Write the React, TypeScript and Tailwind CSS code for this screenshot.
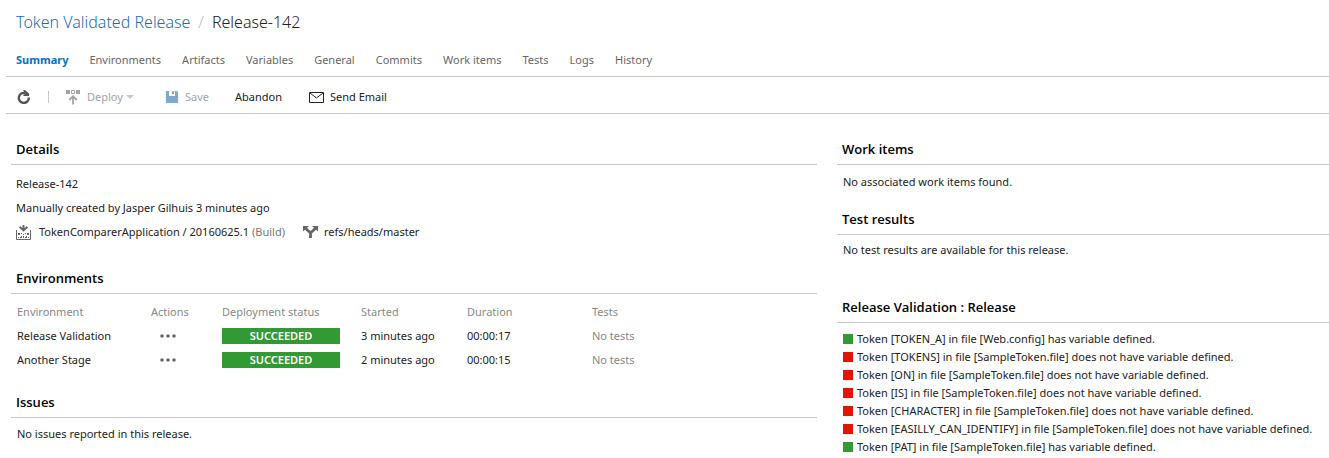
import type { ReactNode } from 'react';

const tabs = ['Summary', 'Environments', 'Artifacts', 'Variables', 'General', 'Commits', 'Work items', 'Tests', 'Logs', 'History'];

const environments = [
  { name: 'Release Validation', status: 'SUCCEEDED', started: '3 minutes ago', duration: '00:00:17', tests: 'No tests' },
  { name: 'Another Stage', status: 'SUCCEEDED', started: '2 minutes ago', duration: '00:00:15', tests: 'No tests' },
];

const tokens = [
  { ok: true, text: 'Token [TOKEN_A] in file [Web.config] has variable defined.' },
  { ok: false, text: 'Token [TOKENS] in file [SampleToken.file] does not have variable defined.' },
  { ok: false, text: 'Token [ON] in file [SampleToken.file] does not have variable defined.' },
  { ok: false, text: 'Token [IS] in file [SampleToken.file] does not have variable defined.' },
  { ok: false, text: 'Token [CHARACTER] in file [SampleToken.file] does not have variable defined.' },
  { ok: false, text: 'Token [EASILLY_CAN_IDENTIFY] in file [SampleToken.file] does not have variable defined.' },
  { ok: true, text: 'Token [PAT] in file [SampleToken.file] has variable defined.' },
];

function RefreshIcon() {
  return (
    <svg width="14" height="14" viewBox="0 0 14 14" aria-hidden="true">
      <path d="M8.5 3.2A5 5 0 1 0 11.8 7.5" fill="none" stroke="#555" strokeWidth="2.4" />
      <path d="M6 0h2l4 3.6V6H6.4V4.6L8.6 4z" fill="#555" />
    </svg>
  );
}

function DeployIcon() {
  return (
    <svg width="14" height="15" viewBox="0 0 14 15" aria-hidden="true">
      <path d="M0 0h4v4H0zM10 0h4v4h-4z" fill="#a3a3a3" />
      <path d="M5.5.5h3v3h-3z" fill="none" stroke="#a3a3a3" />
      <path d="M7 14.5V6.5M3.2 10 7 6.2l3.8 3.8" fill="none" stroke="#a3a3a3" strokeWidth="1.8" />
    </svg>
  );
}

function SaveIcon() {
  return (
    <svg width="12" height="12" viewBox="0 0 12 12" aria-hidden="true">
      <path d="M0 0h3v5h6V0h2l1 1v11H0z" fill="#7fa8cc" />
      <path d="M6 0h2v3H6z" fill="#7fa8cc" />
    </svg>
  );
}

function MailIcon() {
  return (
    <svg width="15" height="11" viewBox="0 0 15 11" aria-hidden="true">
      <path d="M.5.5h14v10H.5zM1 1l6.5 5L14 1" fill="none" stroke="#222" />
    </svg>
  );
}

function BuildIcon() {
  return (
    <svg width="15" height="15" viewBox="0 0 15 15" aria-hidden="true">
      <path d="M.5 5v9.5h14V5" fill="none" stroke="#666" />
      <path d="M7.5 0v5M3.6 1.8l3.9 3.6 3.9-3.6" fill="none" stroke="#666" strokeWidth="2" />
      <path d="M2 8h2v2H2zM5 8h1v1H5zM9 8h1v1H9zM11 8h2v2h-2zM7 9h1v1H7zM5 11h1v2H4v-1h1zM7 11h1v2H7zM10 11h1v2H9v-1h1zM2 12h1v1H2zM12 12h1v1h-1z" fill="#666" />
    </svg>
  );
}

function BranchIcon() {
  return (
    <svg width="15" height="12" viewBox="0 0 15 12" aria-hidden="true">
      <path d="M2 2l5.5 4.8L13 2M7.5 6v6" fill="none" stroke="#666" strokeWidth="2.8" />
      <path d="M0 0h6L0 5.5zM15 0H9l6 5.5z" fill="#666" />
    </svg>
  );
}

function SectionHeading({ children }: { children: ReactNode }) {
  return (
    <h2 className="border-b border-[#c8c8c8] pb-[5px] pl-[5px] font-['Open_Sans','Noto_Sans',sans-serif] text-[13px] leading-5 font-semibold text-black">{children}</h2>
  );
}

export default function App() {
  return (
    <div className="bg-white font-['Noto_Sans','Open_Sans',sans-serif] text-[11px] text-[#222]">
      <header className="ml-1.5 border-b border-[#c8c8c8]">
        <h1 className="flex gap-2 pt-2.5 pl-2.5 text-[16px] leading-6 font-light">
          <a href="#release" className="text-[#1f6cb5]">Token Validated Release</a>
          <span className="text-[#bbb]">/</span>
          <span className="text-[#222]">Release-142</span>
        </h1>
        <nav className="flex gap-[21px] pt-4 pb-1.5 pl-2.5 leading-5">
          {tabs.map((tab, i) => (
            <a key={tab} href="#tab" className={i === 0 ? 'font-bold text-[#0071c5]' : 'text-[#666]'}>
              {tab}
            </a>
          ))}
        </nav>
      </header>

      <div role="toolbar" className="ml-1.5 flex h-[37px] items-center border-b border-[#c8c8c8] pt-1 pl-[11px]">
        <button type="button" aria-label="Refresh"><RefreshIcon /></button>
        <span className="mr-[17px] ml-[17px] h-3 w-px bg-[#c8c8c8]" />
        <button type="button" className="flex w-[100px] items-center gap-[7px] text-[#a3a3a3]">
          <DeployIcon />
          <span className="flex items-center gap-[3px]">
            Deploy
            <svg width="8" height="4" viewBox="0 0 8 4" aria-hidden="true"><path d="M0 0h8L4 4z" fill="#c8c8c8" /></svg>
          </span>
        </button>
        <button type="button" className="flex w-[69px] items-center gap-[7px] text-[#a3a3a3]"><SaveIcon />Save</button>
        <button type="button" className="w-[74px] text-left">Abandon</button>
        <button type="button" className="flex items-center gap-1.5"><MailIcon />Send Email</button>
      </div>

      <div className="grid grid-cols-[minmax(0,806fr)_minmax(0,492fr)] gap-5 pt-[25px] pl-[11px]">
        <main>
          <section>
            <SectionHeading>Details</SectionHeading>
            <div className="pt-[7px] pl-[5px] leading-6">
              <p>Release-142</p>
              <p>Manually created by Jasper Gilhuis 3 minutes ago</p>
              <p className="flex items-center">
                <BuildIcon />
                <span className="mr-[18px] ml-2">TokenComparerApplication / 20160625.1 <span className="text-[#777]">(Build)</span></span>
                <BranchIcon />
                <span className="ml-1.5">refs/heads/master</span>
              </p>
            </div>
          </section>

          <section className="mt-6">
            <SectionHeading>Environments</SectionHeading>
            <table className="mt-1.5 ml-1.5 table-fixed text-left leading-4">
              <colgroup>
                <col className="w-[134px]" />
                <col className="w-[71px]" />
                <col className="w-[139px]" />
                <col className="w-[106px]" />
                <col className="w-[125px]" />
                <col className="w-[100px]" />
              </colgroup>
              <thead className="text-[#888]">
                <tr className="h-6">
                  {['Environment', 'Actions', 'Deployment status', 'Started', 'Duration', 'Tests'].map((label) => (
                    <th key={label} className="font-normal">{label}</th>
                  ))}
                </tr>
              </thead>
              <tbody>
                {environments.map((env) => (
                  <tr key={env.name} className="h-6">
                    <td>{env.name}</td>
                    <td>
                      <button type="button" aria-label="Actions" className="block pl-[9px]">
                        <svg width="16" height="4" viewBox="0 0 16 4" fill="#666" aria-hidden="true">
                          <circle cx="2" cy="2" r="1.8" /><circle cx="8" cy="2" r="1.8" /><circle cx="14" cy="2" r="1.8" />
                        </svg>
                      </button>
                    </td>
                    <td><span className="block w-[118px] bg-[#339933] text-center font-semibold text-white">{env.status}</span></td>
                    <td>{env.started}</td>
                    <td>{env.duration}</td>
                    <td className="text-[#888]">{env.tests}</td>
                  </tr>
                ))}
              </tbody>
            </table>
          </section>

          <section className="mt-5">
            <SectionHeading>Issues</SectionHeading>
            <p className="pt-1.5 pl-1.5 leading-5">No issues reported in this release.</p>
          </section>
        </main>

        <aside>
          <section>
            <SectionHeading>Work items</SectionHeading>
            <p className="pt-[7px] pl-1.5 leading-5">No associated work items found.</p>
          </section>
          <section className="mt-[17px]">
            <SectionHeading>Test results</SectionHeading>
            <p className="pt-[5px] pl-1.5 leading-5">No test results are available for this release.</p>
          </section>
          <section className="mt-[37px]">
            <SectionHeading>Release Validation : Release</SectionHeading>
            <ul className="pt-[7px] pl-1.5 leading-[18px]">
              {tokens.map((token) => (
                <li key={token.text} className="flex items-center gap-1 whitespace-nowrap">
                  <span className={token.ok ? 'size-2.5 bg-[#339933]' : 'size-2.5 bg-[#e51400]'} />
                  {token.text}
                </li>
              ))}
            </ul>
          </section>
        </aside>
      </div>
    </div>
  );
}
